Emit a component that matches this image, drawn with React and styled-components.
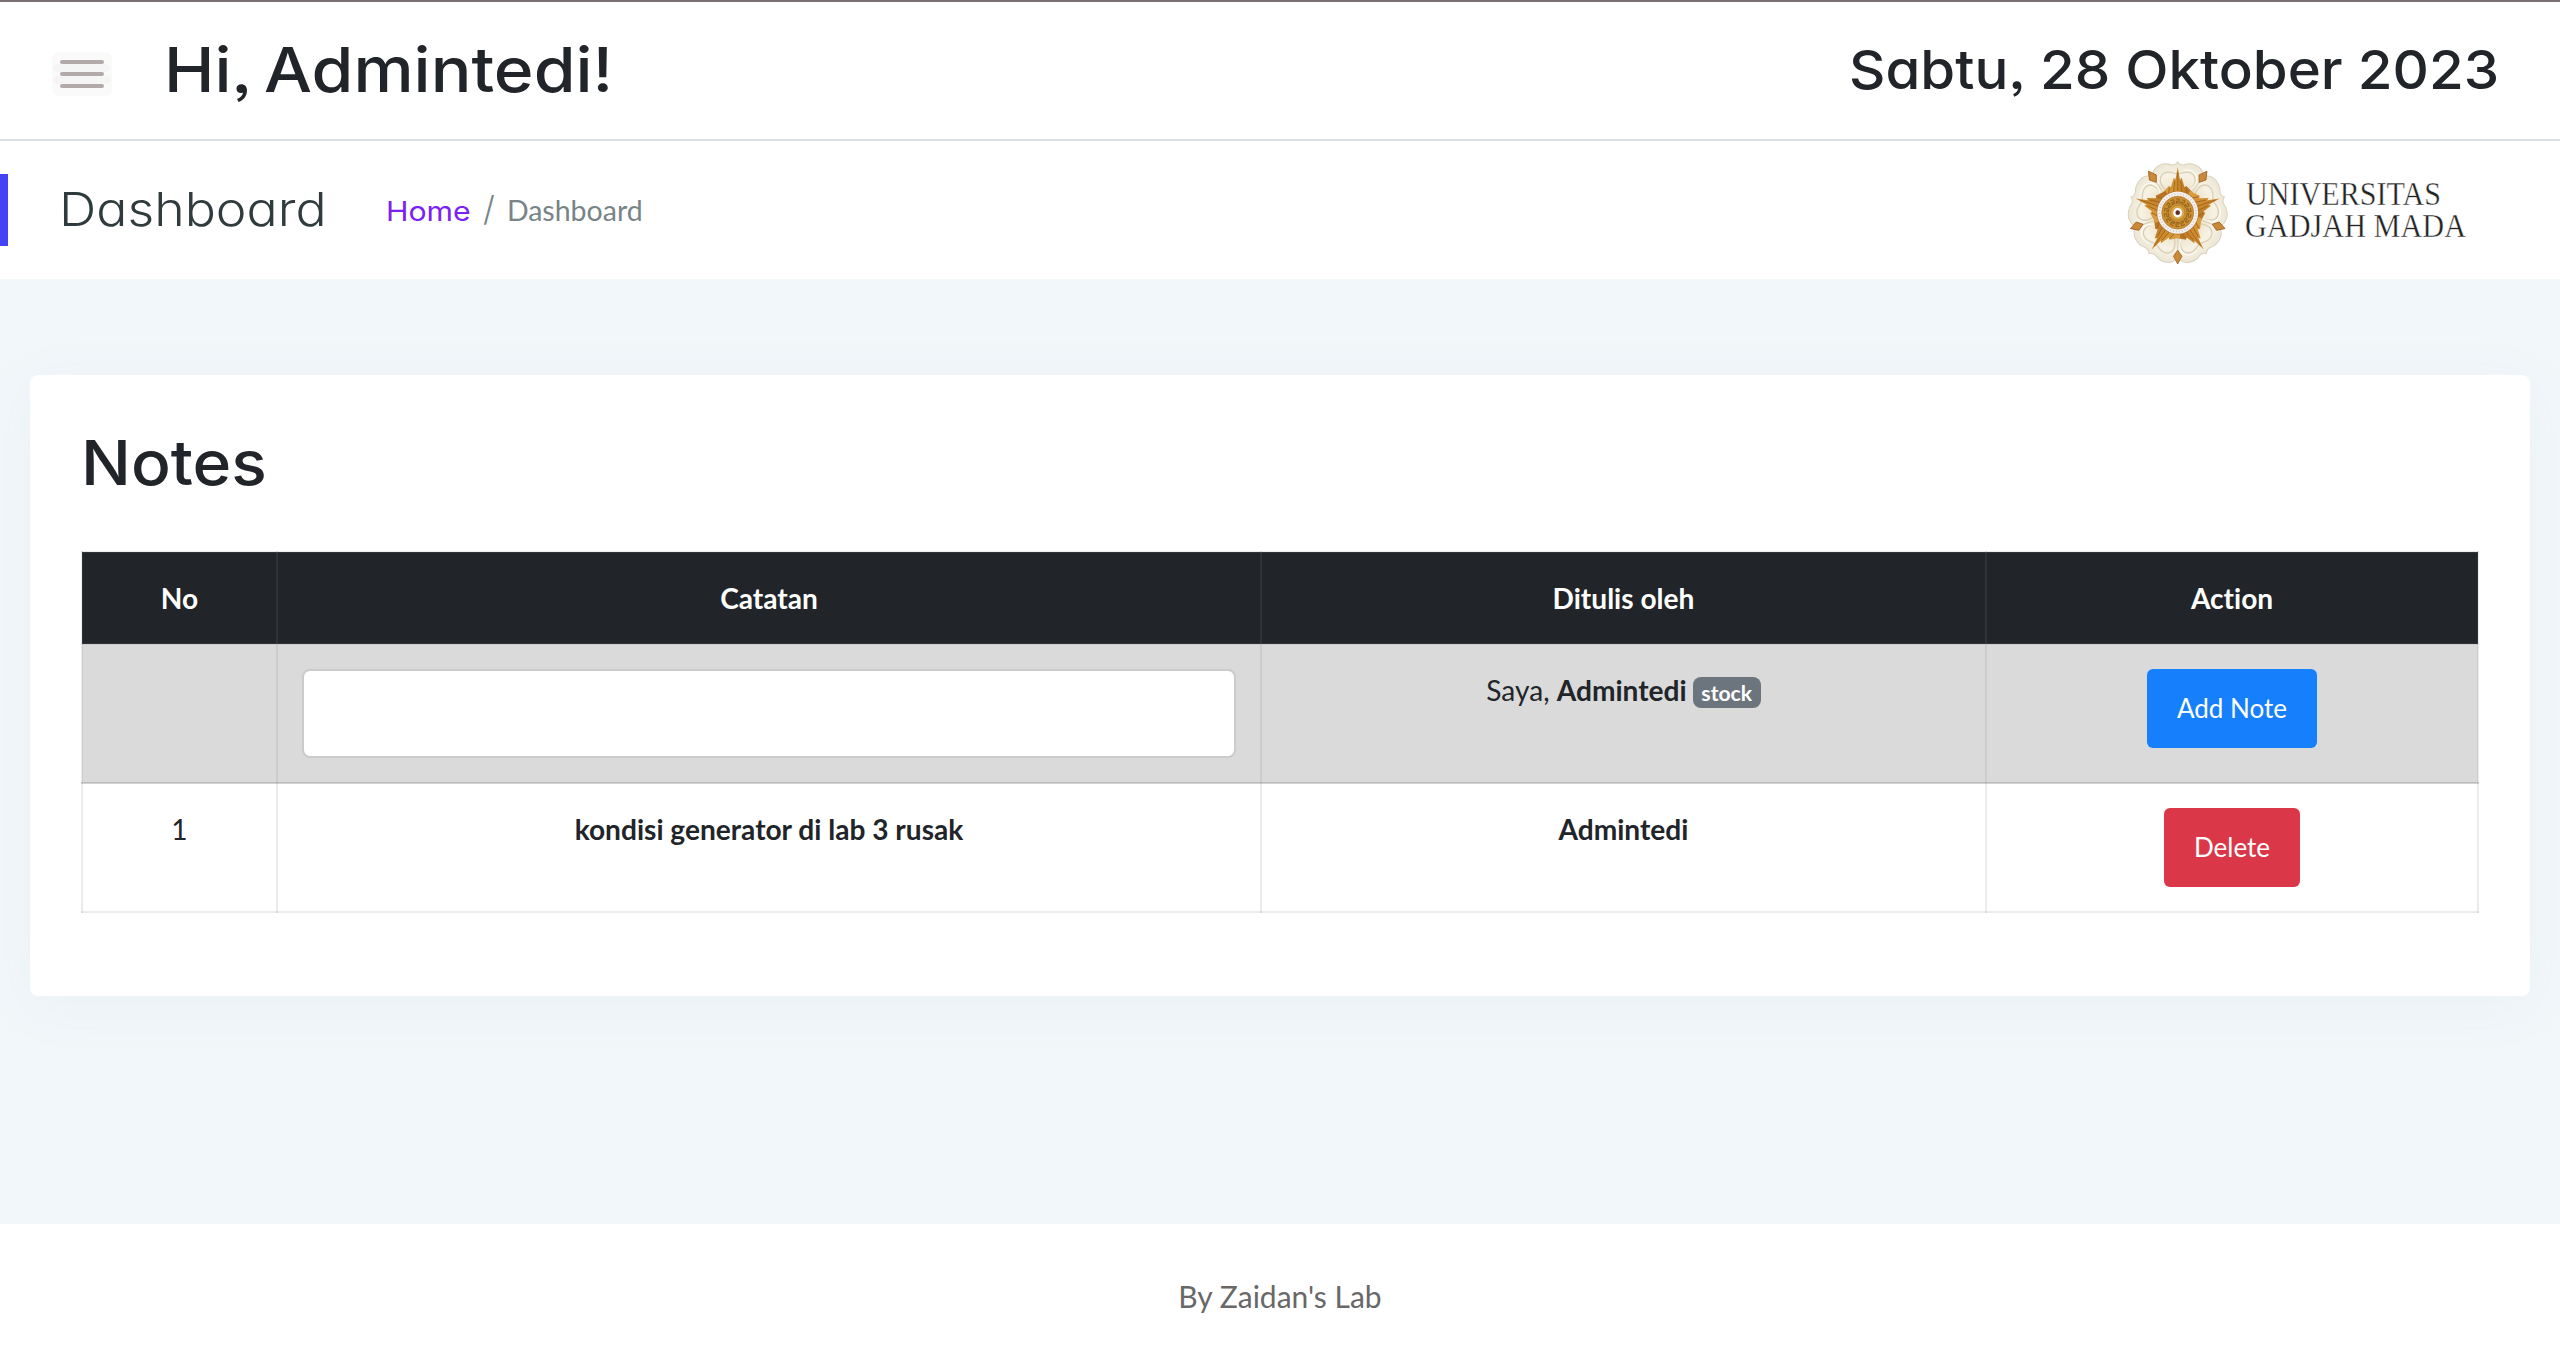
import React from "react";
import styled, { createGlobalStyle } from "styled-components";

const Global = createGlobalStyle`
  * { box-sizing: border-box; }
  body {
    margin: 0;
    background: #f2f7fa;
    color: #212529;
    font-family: Lato, sans-serif;
    font-variant-ligatures: none;
  }
  h1, h2 { margin: 0; }
`;

const geometric = `
  font-family: Inter, sans-serif;
  font-feature-settings: "cv11" 1, "ss03" 1;
  white-space: nowrap;
`;

const Page = styled.div`
  display: flex;
  flex-direction: column;
  height: 1368px;
  border-top: 2px solid #777172;
`;

const Header = styled.header`
  display: flex;
  align-items: flex-start;
  height: 139px;
  padding: 0 61px 0 60px;
  background: #fff;
  border-bottom: 2px solid #d8e1e3;
`;

const MenuButton = styled.button`
  display: flex;
  flex-direction: column;
  gap: 8px;
  width: 44px;
  margin: 58px 60px 0 0;
  padding: 0;
  border: 0;
  background: transparent;
`;

const MenuBar = styled.span`
  height: 4px;
  border-radius: 2px;
  background: #b3a9a9;
  box-shadow: 0 0 0 8px rgba(60, 50, 50, 0.025);
`;

const Greeting = styled.h1`
  ${geometric}
  font-size: 62px;
  line-height: 76px;
  font-weight: 500;
  word-spacing: -5px;
  transform: scaleX(1.093);
  transform-origin: left;
  margin-top: 30px;
`;

const Today = styled.h2`
  ${geometric}
  font-size: 54px;
  line-height: 66px;
  font-weight: 500;
  transform: scaleX(1.045);
  transform-origin: right;
  margin: 35px 0 0 auto;
`;

const SubHeader = styled.div`
  display: flex;
  height: 138px;
  padding-right: 60px;
  background: #fff;
`;

const Accent = styled.div`
  width: 8px;
  height: 72px;
  margin: 33px 51px 0 0;
  background: #4543f6;
`;

const PageTitle = styled.h2`
  ${geometric}
  font-size: 47px;
  line-height: 56px;
  font-weight: 300;
  transform: scaleX(1.102);
  transform-origin: left;
  color: #2f3b3d;
  height: 56px;
  margin-top: 40px;
`;

const Crumbs = styled.nav`
  display: flex;
  align-items: baseline;
  height: 40px;
  margin: 48px 0 0 84px;
  font-size: 28.5px;
  line-height: 40px;
  color: #788487;
`;

const HomeLink = styled.a`
  ${geometric}
  font-size: 27px;
  transform: scaleX(1.12);
  transform-origin: left;
  color: #7b1ff5;
`;

const Slash = styled.span`
  ${geometric}
  font-size: 34px;
  font-weight: 300;
  margin: 0 12px 0 21.5px;
`;

const Logo = styled.svg`
  display: block;
  width: 380px;
  height: 138px;
  margin-left: auto;
`;

const Main = styled.main`
  flex: 1;
  padding: 96px 30px 0;
`;

const Card = styled.section`
  height: 621px;
  padding: 50px 51px;
  border-radius: 8px;
  background: #fff;
  box-shadow: 0 10px 60px rgba(90, 130, 140, 0.06);
`;

const CardTitle = styled.h1`
  ${geometric}
  font-size: 62px;
  line-height: 76px;
  font-weight: 500;
  width: max-content;
  transform: scaleX(1.064);
  transform-origin: left;
  margin: 0 0 50px -0.5px;
`;

const Table = styled.table`
  width: 2398px;
  table-layout: fixed;
  border-collapse: collapse;
  font-size: 28.1px;
  line-height: 42px;
  text-align: center;
`;

const Row = styled.tr`
  height: ${(p) => p.$height}px;
  background: ${(p) => p.$bg};
  color: ${(p) => p.$color || "#212529"};
`;

const line = "2px solid rgba(125, 130, 135, 0.15)";

const Head = styled.th`
  padding: 0;
  border: ${line};
  font-weight: 700;
`;

const Cell = styled.td`
  padding: 24px;
  border: ${line};
  ${(p) => p.$ruled && "border-bottom-color: rgba(95, 100, 105, 0.28);"}
  vertical-align: top;
  font-weight: ${(p) => (p.$bold ? 700 : 400)};
`;

const NoteInput = styled.input`
  display: block;
  width: 934px;
  height: 89px;
  border: 2px solid #cbcbcb;
  border-radius: 8px;
  background: #fff;
`;

const Badge = styled.span`
  display: inline-block;
  height: 31px;
  margin-left: -1px;
  padding: 0 8.5px;
  border-radius: 8px;
  background: #6c757d;
  color: #fff;
  font-size: 21.2px;
  line-height: 32px;
  font-weight: 700;
`;

const Button = styled.button`
  display: block;
  height: 79px;
  margin: 0 auto;
  padding: 0 30px 2px;
  border: 0;
  border-radius: 6px;
  background: ${(p) => p.$bg};
  color: #fff;
  font: 400 26px Lato, sans-serif;
`;

const Footer = styled.footer`
  display: flex;
  align-items: center;
  justify-content: center;
  height: 144px;
  background: #fff;
  color: #686868;
  font-size: 30px;
`;

const turns = [0, 72, 144, 216, 288];
const marks = Array.from({ length: 14 }, (_, i) => (i * 360) / 14);

function UgmLogo() {
  return (
    <Logo viewBox="2120 141 380 138">
      <defs>
        <radialGradient id="petal" gradientUnits="userSpaceOnUse" cx="0" cy="0" r="150">
          <stop offset="0.45" stopColor="#ece2c9" />
          <stop offset="0.75" stopColor="#f7f2e4" />
          <stop offset="1" stopColor="#ece6d5" />
        </radialGradient>
        <linearGradient id="ray" x1="0" x2="1" y1="0" y2="0">
          <stop offset="0" stopColor="#dea344" />
          <stop offset="0.5" stopColor="#cb8a2c" />
          <stop offset="1" stopColor="#ae6a20" />
        </linearGradient>
      </defs>
      <g transform="translate(2177.7 212.7) scale(0.325 0.335)">
        {turns.map((a) => (
          <g key={a} transform={`rotate(${a})`}>
            <path d="M0 0 L70 -96 C94 -128 50 -155 20 -143 Q6 -141 0 -151 Q-6 -141 -20 -143 C-50 -155 -94 -128 -70 -96Z" fill="url(#petal)" stroke="#d9d1bb" strokeWidth="3" />
            <path d="M30 -62 C72 -94 52 -128 18 -120 Q0 -112 -18 -120 C-52 -128 -72 -94 -30 -62" fill="none" stroke="#d8cfb6" strokeWidth="4" />
            <path d="M34 -66 C78 -96 56 -134 18 -126" fill="none" stroke="#fffdf5" strokeWidth="3" />
          </g>
        ))}
        {turns.map((a) => (
          <path key={a} transform={`rotate(${a + 36})`} d="M-13 -130 L0 -153 L13 -130 L0 -112Z" fill="#c98a3a" stroke="#a55f22" strokeWidth="2.5" />
        ))}
        {turns.map((a) => (
          <g key={a} transform={`rotate(${a})`}>
            <path d="M-50 -56 L-27 -80 L-21 -76 L-12 -104 L-7 -98 L0 -136 L7 -98 L12 -104 L21 -76 L27 -80 L50 -56 L0 0Z" fill="url(#ray)" />
            <path d="M0 -122 V-60 M-9 -94 L-13 -60 M9 -94 L13 -60 M-25 -76 L-28 -58 M25 -76 L28 -58" stroke="#a2611a" strokeWidth="2.5" fill="none" />
          </g>
        ))}
        <circle r="65" fill="#b5772b" />
        <circle r="63" fill="#f5f0ec" />
        <circle r="56" fill="none" stroke="#cfc8c8" strokeWidth="5" strokeDasharray="3 6" />
        <circle r="49" fill="#cb9132" stroke="#a5712a" strokeWidth="2" />
        {marks.map((a) => (
          <path key={a} transform={`rotate(${a})`} d="M-5 -41 H5 V-34 H-4 V-29 H6" fill="none" stroke="#95621d" strokeWidth="3" />
        ))}
        <circle r="22" fill="#d9a647" stroke="#b07c28" strokeWidth="2" />
        <circle r="14" fill="#fff" />
        <circle r="7" fill="#5f2d24" />
      </g>
      <g fill="#222" stroke="#fff" strokeWidth="0.4" fontFamily="Liberation Serif, serif" fontSize="33.5">
        <text x="2246" y="205" textLength="195" lengthAdjust="spacingAndGlyphs">UNIVERSITAS</text>
        <text x="2245" y="237" textLength="221" lengthAdjust="spacingAndGlyphs">GADJAH MADA</text>
      </g>
    </Logo>
  );
}

export default function App() {
  return (
    <>
      <Global />
      <Page>
        <Header>
          <MenuButton aria-label="Menu"><MenuBar /><MenuBar /><MenuBar /></MenuButton>
          <Greeting>Hi, Admintedi!</Greeting>
          <Today>Sabtu, 28 Oktober 2023</Today>
        </Header>
        <SubHeader>
          <Accent />
          <PageTitle>Dashboard</PageTitle>
          <Crumbs><HomeLink>Home</HomeLink><Slash>/</Slash><span>Dashboard</span></Crumbs>
          <UgmLogo />
        </SubHeader>
        <Main>
          <Card>
            <CardTitle>Notes</CardTitle>
            <Table>
              <colgroup><col width="195" /><col width="984" /><col width="725" /><col width="492" /></colgroup>
              <thead>
                <Row $height={92} $bg="#212529" $color="#fff">
                  <Head>No</Head><Head>Catatan</Head><Head>Ditulis oleh</Head><Head>Action</Head>
                </Row>
              </thead>
              <tbody>
                <Row $height={139} $bg="#dadada">
                  <Cell $ruled />
                  <Cell $ruled><NoteInput /></Cell>
                  <Cell $ruled>Saya, <b>Admintedi</b> <Badge>stock</Badge></Cell>
                  <Cell $ruled><Button $bg="#167ffc">Add Note</Button></Cell>
                </Row>
                <Row $height={129} $bg="#fff">
                  <Cell>1</Cell>
                  <Cell $bold>kondisi generator di lab 3 rusak</Cell>
                  <Cell $bold>Admintedi</Cell>
                  <Cell><Button $bg="#da3748">Delete</Button></Cell>
                </Row>
              </tbody>
            </Table>
          </Card>
        </Main>
        <Footer>By Zaidan's Lab</Footer>
      </Page>
    </>
  );
}
